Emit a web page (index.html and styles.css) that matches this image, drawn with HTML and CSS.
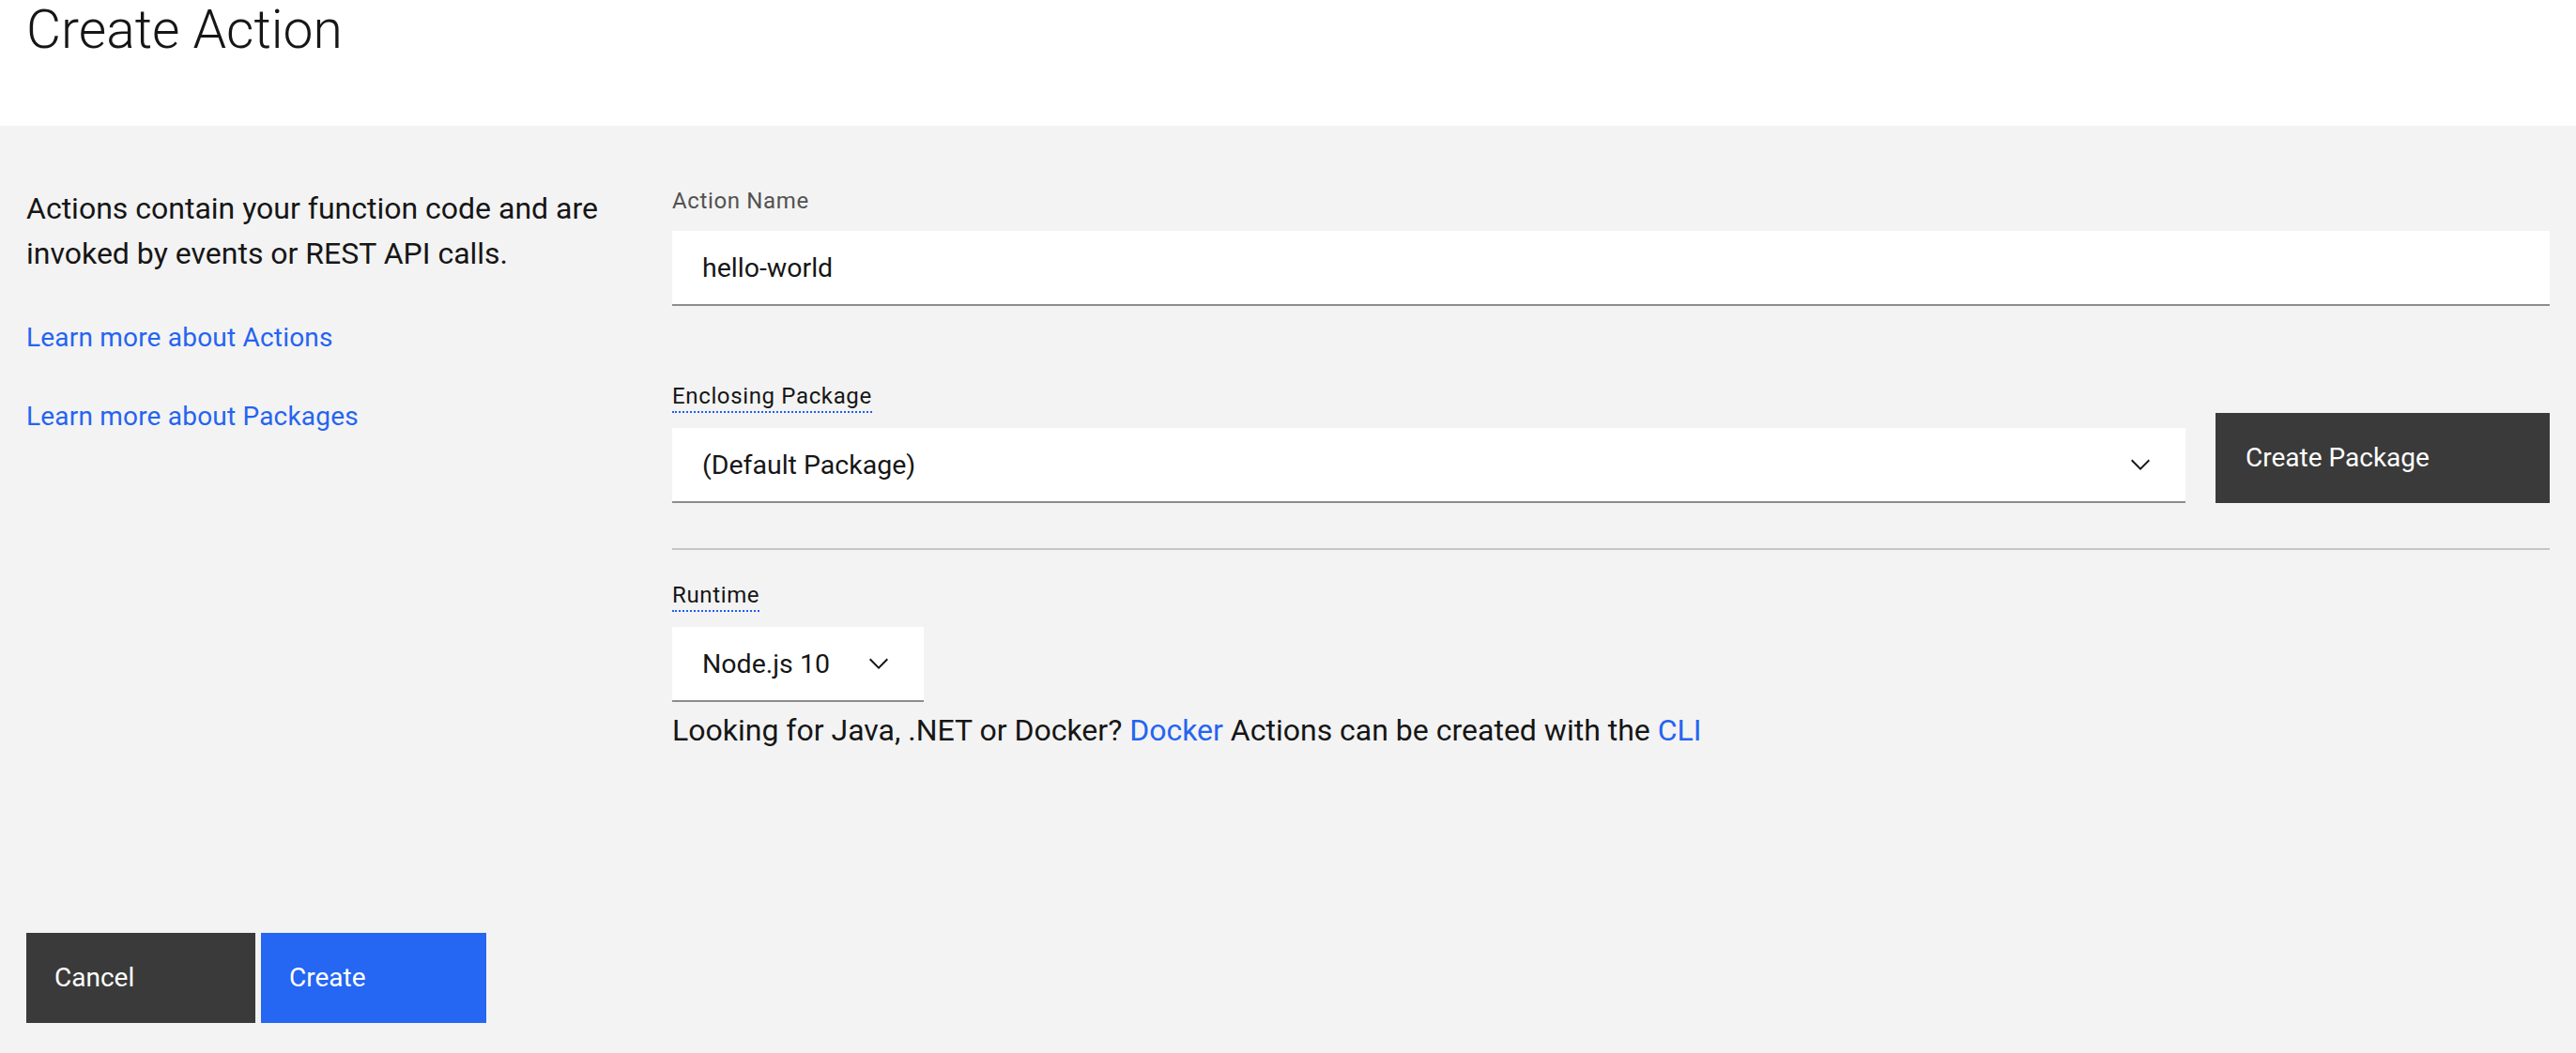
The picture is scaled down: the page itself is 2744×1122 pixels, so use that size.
FILE: index.html
```html
<!DOCTYPE html>
<html lang="en">
<head>
<meta charset="utf-8">
<title>Create Action</title>
<link rel="stylesheet" href="styles.css">
</head>
<body>
<div class="page">
  <header class="page-header">
    <h1 class="page-title">Create Action</h1>
  </header>
  <main class="content">
    <aside class="intro">
      <p class="intro-text">Actions contain your function code and are invoked by events or REST API calls.</p>
      <a class="intro-link intro-link-first" href="#">Learn more about Actions</a>
      <a class="intro-link" href="#">Learn more about Packages</a>
      <div class="actions">
        <button class="btn btn-dark btn-cancel" type="button">Cancel</button>
        <button class="btn btn-primary btn-create" type="button">Create</button>
      </div>
    </aside>
    <section class="form">
      <div class="field">
        <label class="label label-plain" for="action-name">Action Name</label>
        <input class="text-input" id="action-name" type="text" value="hello-world">
      </div>
      <div class="package-row">
        <div class="field field-grow">
          <label class="label label-tip" for="package">Enclosing Package</label>
          <div class="select-wrap">
            <select class="select" id="package"><option>(Default Package)</option></select>
            <svg class="chevron" width="32" height="32" viewBox="0 0 16 16" aria-hidden="true"><path d="M8 11L3 6 3.7 5.3 8 9.6 12.3 5.3 13 6z"/></svg>
          </div>
        </div>
        <button class="btn btn-dark btn-package" type="button">Create Package</button>
      </div>
      <hr class="divider">
      <div class="field field-runtime">
        <label class="label label-tip" for="runtime">Runtime</label>
        <div class="select-wrap select-inline">
          <select class="select" id="runtime"><option>Node.js 10</option></select>
          <svg class="chevron" width="32" height="32" viewBox="0 0 16 16" aria-hidden="true"><path d="M8 11L3 6 3.7 5.3 8 9.6 12.3 5.3 13 6z"/></svg>
        </div>
      </div>
      <p class="hint">Looking for Java, .NET or Docker? <a class="hint-link" href="#">Docker</a> Actions can be created with the <a class="hint-link" href="#">CLI</a></p>
    </section>
  </main>
</div>
</body>
</html>
```

FILE: styles.css
```css
* {
  box-sizing: border-box;
}

html, body {
  margin: 0;
  padding: 0;
}

body {
  font-family: Roboto, "Liberation Sans", Arial, sans-serif;
  color: #161616;
  background: #f3f3f3;
}

.page {
  display: flex;
  flex-direction: column;
  min-height: 100vh;
}

.page-header {
  background: #ffffff;
  height: 134px;
  padding: 0 28px;
}

.page-title {
  margin: 0;
  font-size: 57px;
  line-height: 64px;
  font-weight: 300;
  color: #161616;
}

.content {
  flex: 1;
  display: flex;
  gap: 32px;
  padding: 64px 28px 32px;
  background: #f3f3f3;
}

.intro {
  width: 656px;
  flex: none;
  display: flex;
  flex-direction: column;
  align-items: flex-start;
}

.intro-text {
  margin: 0;
  font-size: 32px;
  line-height: 48px;
  color: #161616;
}

.intro-link {
  font-size: 28px;
  line-height: 48px;
  letter-spacing: 0.2px;
  color: #2564f1;
  text-decoration: none;
  margin-top: 36px;
}

.intro-link-first {
  margin-top: 42px;
}

.actions {
  margin-top: auto;
  display: flex;
  gap: 6px;
}

.btn {
  border: 0;
  border-radius: 0;
  font-family: inherit;
  font-size: 28px;
  line-height: 36px;
  color: #ffffff;
  text-align: left;
  padding: 0 30px;
  height: 96px;
  display: flex;
  align-items: center;
  cursor: pointer;
}

.btn-dark {
  background: #3a3a3a;
}

.btn-primary {
  background: #2566f2;
}

.btn-cancel {
  width: 244px;
}

.btn-create {
  width: 240px;
}

.btn-package {
  width: 356px;
  flex: none;
  padding-left: 32px;
}

.form {
  flex: 1;
  display: flex;
  flex-direction: column;
  align-items: stretch;
}

.field {
  display: flex;
  flex-direction: column;
  align-items: flex-start;
}

.label {
  font-size: 24px;
  line-height: 32px;
  letter-spacing: 0.64px;
  margin-bottom: 16px;
}

.label-plain {
  color: #525252;
}

.label-tip {
  color: #161616;
  border-bottom: 2px dotted #1f5ff5;
}

.text-input {
  width: 100%;
  height: 80px;
  border: 0;
  border-bottom: 2px solid #8d8d8d;
  background: #ffffff;
  padding: 0 32px;
  font-family: inherit;
  font-size: 28.5px;
  color: #161616;
  outline: none;
}

.package-row {
  margin-top: 80px;
  display: flex;
  align-items: flex-end;
  gap: 32px;
}

.field-grow {
  flex: 1;
  align-items: stretch;
}

.field-grow .label-tip {
  align-self: flex-start;
}

.select-wrap {
  position: relative;
  height: 80px;
  background: #ffffff;
  border-bottom: 2px solid #8d8d8d;
}

.select-inline {
  width: 268px;
}

.select {
  appearance: none;
  -webkit-appearance: none;
  width: 100%;
  height: 78px;
  border: 0;
  border-radius: 0;
  background: transparent;
  padding: 0 96px 0 32px;
  font-family: inherit;
  font-size: 28.5px;
  color: #161616;
  outline: none;
}

.chevron {
  position: absolute;
  right: 32px;
  top: 23px;
  fill: #161616;
  pointer-events: none;
}

.divider {
  margin: 48px 0 0;
  border: 0;
  height: 2px;
  background: #c6c6c6;
}

.field-runtime {
  margin-top: 32px;
}

.hint {
  margin: 6px 0 0;
  font-size: 32px;
  line-height: 48px;
  color: #161616;
}

.hint-link {
  color: #2564f1;
  text-decoration: none;
}
```
